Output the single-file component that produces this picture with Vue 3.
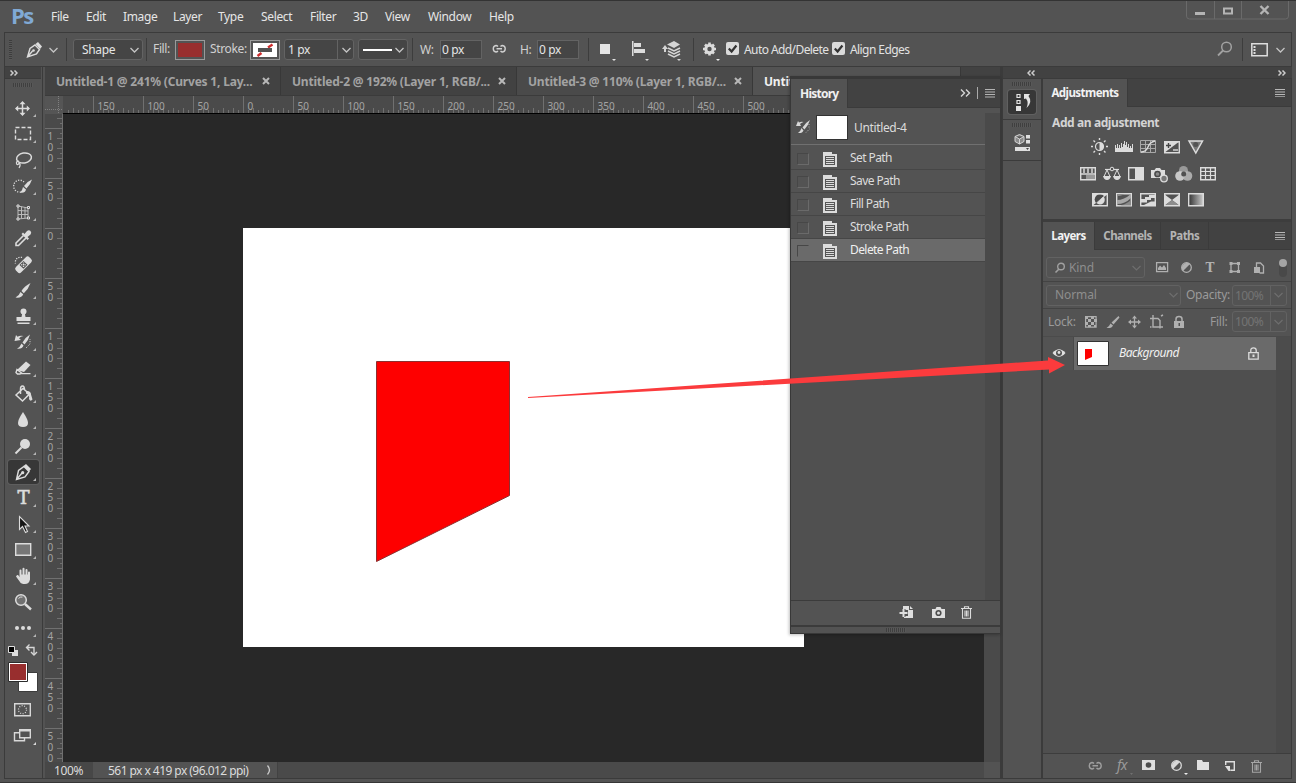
<template>
  <div class="app">
    <header class="menubar">
      <div class="logo">Ps</div>
      <nav class="menus">
        <span v-for="item in menus" :key="item">{{ item }}</span>
      </nav>
      <div class="winbtns">
        <svg width="103" height="20" viewBox="0 1 103 20">
          <path d="M.5 0v16q0 3 3 3h96q3 0 3-3V0M28.500 0v19M55.500 0v19" fill="none" stroke="#6a6a6a" />
          <path d="M9 12h10v3H9z" fill="#b4b4b4" />
          <path d="M38 8.500h8v5h-8z" fill="none" stroke="#b4b4b4" stroke-width="2" />
          <path d="M74.500 6l8 8m0-8l-8 8" stroke="#b4b4b4" stroke-width="2.400" />
        </svg>
      </div>
    </header>

    <section class="options">
      <span class="grip-v"></span>
      <svg class="ic" width="17" height="18" viewBox="0 0 17 18" v-html="icons.penSmall"></svg>
      <svg class="ic" width="9" height="6" viewBox="0 0 9 6" v-html="icons.chev"></svg>
      <i class="sep"></i>
      <div class="field select w70">Shape<svg width="9" height="6" viewBox="0 0 9 6" v-html="icons.chev"></svg></div>
      <i class="sep"></i>
      <span class="label up">Fill:</span>
      <span class="swatch"><b class="red"></b></span>
      <span class="label up">Stroke:</span>
      <span class="swatch">
        <svg width="24" height="14" viewBox="0 0 24 14">
          <path d="M0 0h24v14H0z" fill="#fff" />
          <path d="M4.500 13l4-3M15 4.500L19.500 1.500" stroke="#cf2d2d" stroke-width="2.400" />
          <path d="M5 5h14v4H5z" fill="#535353" />
        </svg>
      </span>
      <div class="field combo w70"><span>1 px</span><i></i><svg width="9" height="6" viewBox="0 0 9 6" v-html="icons.chev"></svg></div>
      <div class="field select w50"><b class="line"></b><svg width="9" height="6" viewBox="0 0 9 6" v-html="icons.chev"></svg></div>
      <i class="sep"></i>
      <span class="label">W:</span>
      <div class="field num">0 px</div>
      <svg class="ic up" width="15" height="10" viewBox="0 0 15 10" v-html="icons.link"></svg>
      <span class="label">H:</span>
      <div class="field num">0 px</div>
      <i class="sep"></i>
      <svg class="ic up" width="18" height="24" viewBox="0 0 18 24"><path d="M0 7h10v10H0zM12 22h4l-2 2z" fill="#e4e4e4" /></svg>
      <svg class="ic up" width="18" height="24" viewBox="0 0 18 24"><path d="M0 4h1.500v15H0zM2 6h7v4H2zM2 12h11v4H2zM13 22h4l-2 2z" fill="#dcdcdc" /></svg>
      <svg class="ic up" width="20" height="24" viewBox="0 0 20 24">
        <path d="M0 12l3-4 3 4H4v3H2v-3zM5 7.500l7-3.500 6 3.500-6 3.500zM15 22h4l-2 2z" fill="#d4d4d4" />
        <path d="M6 11l6 3 6-3M6 14l6 3 6-3M6 17l6 3 6-3" fill="none" stroke="#d4d4d4" stroke-width="1.500" />
      </svg>
      <i class="sep"></i>
      <svg class="ic up" width="18" height="24" viewBox="0 0 18 24">
        <circle cx="6.500" cy="12" r="3.700" fill="none" stroke="#dcdcdc" stroke-width="3" />
        <path d="M6.500 5.500v2M6.500 16.500v2M0 12h2M11 12h2M2 7.500l1.500 1.500M9.500 15l1.500 1.500M2 16.500L3.500 15M9.500 9L11 7.500" stroke="#dcdcdc" stroke-width="2.600" />
        <path d="M13 22h4l-2 2z" fill="#eee" />
      </svg>
      <svg class="ic up" width="13" height="14" viewBox="0 0 13 14" v-html="icons.check"></svg>
      <span class="label light">Auto Add/Delete</span>
      <svg class="ic up" width="13" height="14" viewBox="0 0 13 14" v-html="icons.check"></svg>
      <span class="label light">Align Edges</span>
      <svg class="ic up" width="16" height="16" viewBox="0 0 16 16"><circle cx="9.500" cy="6" r="4.800" fill="none" stroke="#a2a2a2" stroke-width="1.500" /><path d="M6 9.500L1 14.500" stroke="#a2a2a2" stroke-width="1.800" /></svg>
      <i class="sep"></i>
      <svg class="ic" width="17" height="14" viewBox="0 0 17 14"><path d="M.8.8h15.400v12H.8z" fill="none" stroke="#dedede" stroke-width="1.500" /><path d="M3.500 3v8" stroke="#dedede" stroke-width="2" stroke-dasharray="2 1" /></svg>
      <svg class="ic" width="9" height="6" viewBox="0 0 9 6" v-html="icons.chev"></svg>
    </section>

    <main class="work">
      <aside class="tools">
        <div class="tools-head"><svg width="8" height="6" viewBox="0 0 8 6" v-html="icons.dblRight"></svg></div>
        <span class="grip-h"></span>
        <div v-for="tool in tools" :key="tool" class="tool" :class="{ on: tool === 'pen' }">
          <svg width="31" height="24" viewBox="0 0 31 24">
            <g v-html="icons[tool]"></g>
            <path v-if="tool !== 'zoom'" d="M28 18v3h-3z" fill="#b5b5b5" />
          </svg>
        </div>
        <svg class="colors" width="37" height="110" viewBox="0 0 37 110">
          <path d="M7 9h6v6H7z" fill="#dedede" /><path d="M3.500 5.500h6v6h-6z" fill="#000" stroke="#dedede" />
          <path d="M22 6.500h7v6M24.500 3.500l-3 3 3 3M26 11l3 3 3-3" fill="none" stroke="#d6d6d6" stroke-width="1.400" />
          <path d="M13.500 31.500h19v19h-19z" fill="#fff" stroke="#3c3c3c" />
          <path d="M3.500 21.500h19v19h-19z" fill="#fff" stroke="#2c2c2c" /><path d="M5 23h16v16H5z" fill="#982e2e" />
          <path d="M9.700 62.700h15.600v12H9.700z" fill="none" stroke="#d8d8d8" stroke-width="1.400" />
          <circle cx="17.500" cy="68.700" r="4" fill="none" stroke="#d8d8d8" stroke-width="1.300" stroke-dasharray="1 1.500" />
          <path d="M14.500 91.700h-5v8h10v-3M14.700 89h10.600v7.800H14.700z" fill="none" stroke="#d8d8d8" stroke-width="1.400" />
          <path d="M14 88h12v2.500H14zM31 101v3h-3z" fill="#d8d8d8" />
        </svg>
      </aside>

      <section class="doc">
        <div class="tabs">
          <div v-for="tab in tabs" :key="tab" class="tab">
            <span>{{ tab }}</span>
            <svg width="8" height="8" viewBox="0 0 8 8"><path d="M1 1l6 6M7 1L1 7" stroke="#b8b8b8" stroke-width="2" /></svg>
          </div>
          <div class="tab active"><span>Untitled-4</span></div>
        </div>
        <svg class="ruler-top" width="955" height="18" viewBox="45 96 955 18">
          <path d="M45 96h18v18H45z" fill="#555" />
          <path d="M45 109.500h18M58.500 96v18" stroke="#808080" stroke-dasharray="1 1" />
          <path d="M63 113.500h938" stroke="#000" />
          <path :d="topTicks" stroke="#707070" />
          <text v-for="t in topLabels" :key="t.x" :x="t.x + 4.500" y="110">{{ t.text }}</text>
        </svg>
        <div class="stage">
          <svg class="ruler-left" width="18" height="648" viewBox="45 114 18 648">
            <path :d="leftTicks" stroke="#707070" />
            <path d="M62.500 114v648" stroke="#707070" />
            <g v-for="t in leftLabels" :key="t.y">
              <text v-for="(c, i) in t.text" :key="i" x="47.500" :y="t.y + 12 + i * 11">{{ c }}</text>
            </g>
          </svg>
          <svg class="canvas" width="921" height="648" viewBox="63 114 921 648">
            <path d="M243 228h561v419H243z" fill="#fff" />
            <path d="M376.500 361.500h133v134l-133 66z" fill="#fe0000" stroke="#8c3030" />
          </svg>
          <span class="vscroll"></span>
        </div>
        <div class="status">
          <span class="pct">100%</span>
          <span class="info">561 px x 419 px (96.012 ppi)<svg width="5" height="10" viewBox="0 0 5 10"><path d="M.5.5q4 4.500 0 9" fill="none" stroke="#ccc" stroke-width="1.300" /></svg></span>
          <span class="hscroll"></span>
          <span class="corner"></span>
        </div>
      </section>

      <section class="dock">
        <div class="dock-head">
          <svg width="8" height="6" viewBox="0 0 8 6" v-html="icons.dblLeft"></svg>
          <svg width="8" height="6" viewBox="0 0 8 6" v-html="icons.dblRight"></svg>
        </div>
        <div class="dock-body">
          <aside class="strip">
            <div class="strip-cell">
              <span class="grip-h"></span>
              <div class="strip-btn on">
                <svg width="28" height="24" viewBox="0 0 28 24">
                  <path d="M9 4.500h3v3H9zM9 10.500h3v3H9z" fill="none" stroke="#e4e4e4" stroke-width="1.200" />
                  <path d="M8 16h5v5H8zM16 9V4h6l-1.500 2q4.500 6-2 12 2.500-5.500-.5-9.500z" fill="#e4e4e4" />
                </svg>
              </div>
            </div>
            <div class="strip-cell">
              <span class="grip-h"></span>
              <div class="strip-btn">
                <svg width="28" height="24" viewBox="0 0 28 24">
                  <path d="M11.500 3.500l4.500 2v5l-4.500 2.500L7 10.500v-5zM7 5.500l4.500 2.500L16 5.500M11.500 8v5" fill="#8a8a8a" stroke="#d4d4d4" />
                  <path d="M18 4h4v3.500h-4zM18 9h4v3.500h-4zM7 16h15v4H7z" fill="#dedede" /><path d="M18 17h3l-1.500 2z" fill="#444" />
                </svg>
              </div>
            </div>
          </aside>

          <section class="panels">
            <div class="panel adjust">
              <div class="panel-tabs"><b class="on w84">Adjustments</b><svg width="11" height="8" viewBox="0 0 11 8" v-html="icons.burger"></svg></div>
              <h4>Add an adjustment</h4>
              <div v-for="(row, i) in adjustments" :key="i" class="adj-row">
                <svg v-for="name in row" :key="name" width="24" height="20" viewBox="0 0 24 20" v-html="icons[name]"></svg>
              </div>
            </div>

            <div class="panel layers">
              <div class="panel-tabs">
                <b class="on">Layers</b><b class="w66">Channels</b><b class="w48">Paths</b>
                <svg width="11" height="8" viewBox="0 0 11 8" v-html="icons.burger"></svg>
              </div>
              <div class="lrow filter">
                <div class="dim kind">
                  <svg width="12" height="12" viewBox="0 0 12 12"><circle cx="7" cy="4.500" r="3.300" fill="none" stroke="#a0a0a0" stroke-width="1.400" /><path d="M5 7L1.500 10.500" stroke="#a0a0a0" stroke-width="1.600" /></svg>
                  <span>Kind</span>
                  <svg width="9" height="6" viewBox="0 0 9 6" v-html="icons.chevDim"></svg>
                </div>
                <svg width="141" height="22" viewBox="1146 257 141 22">
                  <g fill="none" stroke="#b0b0b0" stroke-width="1.300">
                    <path d="M1156.600 262.600h11v9h-11z" />
                    <circle cx="1186.500" cy="267.500" r="4.800" />
                    <path d="M1231 263.500h7.500v8H1231z" />
                    <path d="M1256.500 267v-4h4l3 3v7h-4" />
                  </g>
                  <path d="M1158 270v-2l2-2.500 2 2 2-2.500 2 3v2zM1190 264a5 5 0 0 0-7 7zM1229.500 262h3v3h-3zM1237 262h3v3h-3zM1229.500 270h3v3h-3zM1237 270h3v3h-3zM1254 267h6v6h-6z" fill="#b0b0b0" />
                  <text x="1205.500" y="272" class="tee">T</text>
                  <rect x="1279" y="260" width="8" height="17" rx="4" fill="#494949" />
                  <circle cx="1283" cy="263" r="4" fill="#a4a4a4" />
                </svg>
              </div>
              <div class="lrow blend">
                <div class="dim mode"><span>Normal</span><svg width="9" height="6" viewBox="0 0 9 6" v-html="icons.chevDim"></svg></div>
                <span class="dimlabel">Opacity:</span>
                <div class="dim pctbox"><span>100%</span><svg width="9" height="6" viewBox="0 0 9 6" v-html="icons.chevDim"></svg></div>
              </div>
              <div class="lrow lock">
                <span class="dimlabel locklabel">Lock:</span>
                <svg width="108" height="16" viewBox="1080 314 108 16">
                  <path d="M1085.600 316.600h10.500v10.500h-10.500z" fill="none" stroke="#b0b0b0" stroke-width="1.200" />
                  <path d="M1085 316h3v3h-3zM1091 316h3v3h-3zM1088 319h3v3h-3zM1094 319h3v3h-3zM1085 322h3v3h-3zM1091 322h3v3h-3zM1088 325h3v2h-3zM1094 325h2v2h-2z" fill="#b0b0b0" />
                  <path d="M1118.500 316l-7 6.500 2 2 6-7zM1110.500 323.500l2.500 2q-1 3-6.500 2.500 2.500-1 4-4.500z" fill="#b0b0b0" />
                  <path d="M1134.500 317v10M1129.500 322h10" stroke="#b0b0b0" stroke-width="1.300" />
                  <path d="M1134.500 315.500l2.500 3h-5zM1134.500 328.500l2.500-3h-5zM1128 322l3-2.500v5zM1141 322l-3-2.500v5z" fill="#b0b0b0" />
                  <path d="M1153 315v12h10M1150 318.500h8l2 2v8M1161 316l2-1M1150 327h1.500" fill="none" stroke="#b0b0b0" stroke-width="1.400" />
                  <path d="M1174 321h10v7h-10z" fill="#b0b0b0" /><path d="M1176 321v-2q0-2.500 3-2.500t3 2.500v2" fill="none" stroke="#b0b0b0" stroke-width="1.500" />
                  <path d="M1178.500 323h1.500v3h-1.500z" fill="#535353" />
                </svg>
                <span class="dimlabel filllabel">Fill:</span>
                <div class="dim pctbox"><span>100%</span><svg width="9" height="6" viewBox="0 0 9 6" v-html="icons.chevDim"></svg></div>
              </div>
              <div class="layer-list">
                <div class="eye">
                  <svg width="14" height="10" viewBox="0 0 14 10"><path d="M.5 5Q7-2.500 13.500 5 7 12.500.5 5z" fill="#e2e2e2" /><circle cx="7" cy="5" r="3" fill="#505050" /><circle cx="7" cy="4.500" r="1.400" fill="#e2e2e2" /></svg>
                </div>
                <div class="layer">
                  <svg class="thumb" width="32" height="25" viewBox="0 0 32 25"><path d="M.5.500h31v24H.5z" fill="#fff" stroke="#333" /><path d="M8 8h7v8l-7 3z" fill="#fe0000" /></svg>
                  <em>Background</em>
                  <svg width="11" height="13" viewBox="0 0 11 13"><path d="M.8 5.600h9.400v6.600H.8zM2.800 5.500V3.300Q2.800.8 5.500.8t2.700 2.500v2.200" fill="none" stroke="#dcdcdc" stroke-width="1.300" /><path d="M4.500 7.500h2v2.500h-2z" fill="#dcdcdc" /></svg>
                </div>
                <div class="list-gutter"></div>
              </div>
              <div class="list-rest"></div>
              <svg class="layer-foot" width="248" height="24" viewBox="1043 754 248 24">
                <g transform="translate(1088 761)" opacity=".6" v-html="icons.link"></g>
                <text x="1117" y="770" class="fx">fx</text>
                <path d="M1142 760h13v10h-13z" fill="#dedede" /><circle cx="1148.500" cy="765" r="2.800" fill="#4c4c4c" />
                <circle cx="1176.500" cy="765.500" r="4.800" fill="none" stroke="#d8d8d8" stroke-width="1.300" /><path d="M1180 762a5 5 0 0 0-7 7z" fill="#d8d8d8" /><path d="M1184 773h4l-2 2z" fill="#eee" />
                <path d="M1130 773h3l-1.500 2z" fill="#707070" />
                <path d="M1197 760h5l1 2h6v8h-12z" fill="#e0e0e0" />
                <path d="M1225.700 765v-3.300h8.600v8.600h-4" fill="none" stroke="#dedede" stroke-width="1.400" /><path d="M1225 766h5v5h-1.500z" fill="#dedede" />
                <g transform="translate(1251 760)" opacity=".6" v-html="icons.trash"></g>
              </svg>
            </div>
          </section>
        </div>
      </section>
    </main>

    <section class="history">
      <div class="history-head">
        <b>History</b>
        <svg width="36" height="12" viewBox="0 0 36 12">
          <path d="M1 2.500l3.500 3.500L1 9.500M6 2.500L9.500 6 6 9.500" fill="none" stroke="#d4d4d4" stroke-width="1.400" />
          <path d="M17.500 0v12" stroke="#aaa" />
          <path d="M25 2.500h10M25 5h10M25 7.500h10M25 10h10" stroke="#b4b4b4" />
        </svg>
      </div>
      <div class="history-body">
        <div class="history-list">
          <div class="snapshot">
            <svg width="15" height="14" viewBox="0 0 15 14"><path d="M14 0q-5 3-7.500 7.500l2 2Q12 6 14 0zM5.500 8l2 2.500q-1 3-5.500 2.500 2.500-1.500 3.500-5zM0 6l2-5 1 1.500q2-1 4.500-.5Q5 3 4 4l1 2z" fill="#d8d8d8" /><path d="M10 12.500l4-4M13 4v4" stroke="#bbb" stroke-dasharray="1 1.500" /></svg>
            <span class="shot"></span>
            <span class="shot-name">Untitled-4</span>
          </div>
          <div v-for="state in states" :key="state" class="state" :class="{ on: state === 'Delete Path' }">
            <i></i>
            <svg width="14" height="15" viewBox="0 0 14 15"><path d="M0 0h9v2h5v13H0z" fill="#dcdcdc" /><path d="M2 4h10v9H2z" fill="#565656" /><path d="M3 5.500h8M3 7.500h8M3 9.500h8M3 11.500h8" stroke="#dcdcdc" /></svg>
            <span>{{ state }}</span>
          </div>
        </div>
        <div class="history-scroll"></div>
      </div>
      <div class="history-foot">
        <svg width="14" height="13" viewBox="0 0 14 13"><path d="M4 0h6v4h4v8H5v-2h4V4H4z" fill="#dedede" /><path d="M11 0l3 3h-3z" fill="#dedede" /><path d="M4.500 3v8M.5 7h8" stroke="#535353" stroke-width="4" /><path d="M4.500 3v8M.5 7h8" stroke="#dedede" stroke-width="2" /></svg>
        <svg width="13" height="11" viewBox="0 0 13 11"><path d="M0 2h3.500L4.500 0h4l1 2H13v9H0z" fill="#dedede" /><circle cx="6.500" cy="6" r="2.300" fill="none" stroke="#4c4c4c" stroke-width="1.600" /></svg>
        <svg width="11" height="13" viewBox="0 0 11 13" v-html="icons.trash"></svg>
      </div>
      <div class="history-grip"><span class="grip-h"></span></div>
    </section>

    <svg class="arrow" width="540" height="46" viewBox="526 354 540 46">
      <path d="M528 397L1048 360.500V357l17 8-16 8.500v-4L528 398z" fill="#fb3b3d" />
    </svg>
  </div>
</template>

<script setup>
const menus = ['File', 'Edit', 'Image', 'Layer', 'Type', 'Select', 'Filter', '3D', 'View', 'Window', 'Help']

const tabs = [
  'Untitled-1 @ 241% (Curves 1, Lay...',
  'Untitled-2 @ 192% (Layer 1, RGB/...',
  'Untitled-3 @ 110% (Layer 1, RGB/...'
]

const states = ['Set Path', 'Save Path', 'Fill Path', 'Stroke Path', 'Delete Path']

const tools = [
  'move', 'marquee', 'lasso', 'quickSelect', 'cropPersp', 'eyedropper', 'heal', 'brush', 'stamp',
  'historyBrush', 'eraser', 'bucket', 'drop', 'dodge', 'pen', 'type', 'select', 'rect', 'hand', 'zoom', 'dots'
]

const adjustments = [
  ['bright', 'levels', 'curves', 'exposure', 'vibrance'],
  ['hue', 'balance', 'bw', 'photo', 'mixer', 'lookup'],
  ['invert', 'poster', 'threshold', 'selective', 'gradient']
]

// rulers: one unit per pixel, the page origin is at 243,228
const topLabels = []
const leftLabels = []
let topTicks = ''
let leftTicks = ''

for (let x = 68; x < 985; x += 5) {
  const d = x - 243
  const len = d % 50 === 0 ? 17 : d % 10 === 0 ? 5 : 3
  topTicks += `M${x + 0.5} 113v-${len}`
  if (d % 50 === 0) topLabels.push({ x, text: String(Math.abs(d)) })
}
for (let y = 118; y < 762; y += 5) {
  const d = y - 228
  const len = d % 50 === 0 ? 18 : d % 10 === 0 ? 6 : 3
  leftTicks += `M63 ${y + 0.5}h-${len}`
  if (d % 50 === 0) leftLabels.push({ y, text: String(Math.abs(d)).split('') })
}

const c = '#dcdcdc'
const box = `<path d="M4.700 3.700h14.600v12H4.700z" fill="none" stroke="${c}" stroke-width="1.400"/>`

const icons = {
  chev: '<path d="M.5 1l4 4 4-4" fill="none" stroke="#c4c4c4" stroke-width="1.300"/>',
  chevDim: '<path d="M.5 1l4 4 4-4" fill="none" stroke="#6e6e6e" stroke-width="1.200"/>',
  dblRight: '<path d="M.5.500L3 3 .5 5.500M4.500.500L7 3 4.500 5.500" fill="none" stroke="#ccc" stroke-width="1.500"/>',
  dblLeft: '<path d="M3.500.500L1 3l2.500 2.500M7.500.500L5 3l2.500 2.500" fill="none" stroke="#ccc" stroke-width="1.500"/>',
  burger: '<path d="M0 .5h10M0 3h10M0 5.500h10M0 7.800h10" stroke="#b8b8b8"/>',
  check: '<rect width="13" height="13" rx="2" fill="#dadada"/><path d="M2.800 6.500l2.800 3 4.800-6" fill="none" stroke="#333" stroke-width="2.200"/>',
  link: '<path d="M6 2.500Q5 1.500 4 1.500A3.300 3.300 0 0 0 4 8q1 0 2-1M8.500 2.500q1-1 2-1a3.300 3.300 0 0 1 0 6.500q-1 0-2-1M4.500 4.800h5.500" fill="none" stroke="#d0d0d0" stroke-width="1.400"/>',
  trash: '<path d="M0 2.500h11M3.500 2V.7h4V2M1.500 3v9.200h8V3M4 4.500v6M5.500 4.500v6M7 4.500v6" fill="none" stroke="#dcdcdc" stroke-width="1.100"/>',
  penSmall: `<path d="M1.500 16L4 7.500 9 4l4.500 4.500L10.500 13zM1.500 16l5-6" fill="none" stroke="${c}" stroke-width="1.400"/><circle cx="7.500" cy="9.500" r="1.300" fill="${c}"/><path d="M9.500 3L12 1l4 4.500-2 2.500z" fill="${c}"/>`,
  move: `<path d="M14.500 6.500v12M8.500 12.500h12" stroke="${c}" stroke-width="1.500"/><path d="M14.500 5l3 3.200h-6zM14.500 20l3-3.200h-6zM7 12.500l3.200-3v6zM22 12.500l-3.200-3v6z" fill="${c}"/>`,
  marquee: `<path d="M7.500 5.500h15v12h-15z" fill="none" stroke="${c}" stroke-width="1.400" stroke-dasharray="4 2"/>`,
  lasso: `<ellipse cx="16" cy="10" rx="7.500" ry="5" transform="rotate(-10 16 10)" fill="none" stroke="${c}" stroke-width="1.500"/><path d="M11 13q-3 0-2.500 2.500t3-.5q1.500 2-.5 5" fill="none" stroke="${c}" stroke-width="1.200"/>`,
  quickSelect: `<path d="M16 8a6 6 0 1 0-3 10" fill="none" stroke="${c}" stroke-width="1.300" stroke-dasharray="1.200 1.400"/><path d="M24 5.500q-5 2-8 6.500l2.500 2.500q4-4 5.500-9zM15 13l3 2.500q-1 4-6 3 2.500-2 3-5.500z" fill="${c}"/>`,
  cropPersp: `<path d="M10 6l10 2v10l-10 1zM13.500 6.500v12M17 7v11M10 10.500l10 .5M10 14.500h10" fill="none" stroke="#bbb" stroke-width="1"/><path d="M9 5h2v2H9zM19.500 6.500h2v2h-2zM9 18h2v2H9zM19.500 17h2v2h-2z" fill="#555" stroke="${c}"/>`,
  eyedropper: `<path d="M15.500 9.500L8 17v2.500h2.500L18 12" fill="none" stroke="${c}" stroke-width="1.600"/><path d="M13.500 8l1.500-1.500 1.500 1.500 2.500-3q2-1.500 3.500 0t0 3.500l-3 2.500 1.500 1.500-1.500 1.500z" fill="${c}"/>`,
  heal: `<path d="M14 5.500a5 5 0 0 0-6.500 6" fill="none" stroke="${c}" stroke-width="1.300" stroke-dasharray="1.200 1.300"/><rect x="6" y="9" width="19" height="7.500" rx="2.500" transform="rotate(-45 15.500 12.700)" fill="${c}"/><path d="M11.500 13l4-4 4 3.700-4 4z" fill="#535353"/><path d="M13.200 12.800h4.800M15.500 10.500v5" stroke="${c}" stroke-width="1.400" stroke-dasharray="1 .7"/>`,
  brush: `<path d="M22.500 5q-6 3-9 8l2.300 2.300Q20.500 11 22.500 5zM12.500 14l2.700 2.300q-1.500 4-7.700 3.200 3.500-1.500 5-5.500z" fill="${c}"/>`,
  stamp: `<circle cx="15.500" cy="7.500" r="3" fill="${c}"/><path d="M14.300 9h2.500l.7 4h5v4h-14v-4h5zM9.500 18.500h12V20h-12z" fill="${c}"/>`,
  historyBrush: `<path d="M22 4.500q-5 3-7.500 8l2 2Q20.500 10.500 22 4.500zM13.500 13.500l2 2q-1.500 4-6.500 3.200 3-1.500 4.500-5.200zM6.500 11l1.500-6 1.500 1.800Q12 5 15.500 6q-3 .5-4.500 2.300l2 1.700z" fill="${c}"/><path d="M18 18l4-4V9" fill="none" stroke="${c}" stroke-dasharray="1 1.500"/>`,
  eraser: `<path d="M9 14l9-8.500 4.500 3.500-6.500 7z" fill="${c}"/><path d="M9 13.500L13.500 17 12 18H9.500L8 16.500zM13 17.600h9.500" fill="none" stroke="${c}" stroke-width="1.400"/>`,
  bucket: `<path d="M8 13l7-6.500 6.500 5.500-7 7zM12.500 12V7q0-3 2-3t2 4" fill="none" stroke="${c}" stroke-width="1.500"/><path d="M18 9q5-.5 5 3.500l1.500 5q-2 2.500-3.500-.5 1-4-3-5.500z" fill="${c}"/>`,
  drop: `<path d="M15 4q5 7.500 5 11 0 4-5 4t-5-4q0-3.500 5-11z" fill="${c}"/>`,
  dodge: `<circle cx="17" cy="10" r="5" fill="${c}"/><path d="M13.500 13.500L7.500 19.500" stroke="${c}" stroke-width="2"/>`,
  pen: `<path d="M8.500 19.500l2-9 5.500-4 5 5-4 5.500zM8.500 19.500l5.500-6.500" fill="none" stroke="${c}" stroke-width="1.400"/><circle cx="14.700" cy="12.700" r="1.600" fill="${c}"/><path d="M15.500 6L18 4l5 5-2 2.500z" fill="${c}"/>`,
  type: `<text x="9.500" y="18" font-family="DejaVu Serif, serif" font-size="18" stroke="${c}" stroke-width=".6" fill="${c}">T</text>`,
  select: `<path d="M11.500 4.500v13l3-3 3 6 2-1-2.500-5.500h4z" fill="#151515" stroke="${c}" stroke-width="1.100"/>`,
  rect: `<path d="M7.700 5.700h15v11.600h-15z" fill="#777" stroke="${c}" stroke-width="1.400"/>`,
  hand: `<path d="M9.500 12L12 15M12.500 12V6.500M15.500 11V4.800M18.500 12V6M21 13.500V8.500" fill="none" stroke="${c}" stroke-width="2" stroke-linecap="round"/><path d="M8 12.500l1.500-1 2.500 2 .5-3h9.500v5q-1 4.500-5 4.500t-5-2z" fill="${c}"/>`,
  zoom: `<circle cx="13" cy="10" r="5.300" fill="#707070" stroke="${c}" stroke-width="1.500"/><path d="M17 14l6 5.500" stroke="${c}" stroke-width="2.400"/><path d="M10.500 8.500q1.500-2 4-1.500" fill="none" stroke="${c}"/>`,
  dots: `<circle cx="9" cy="12" r="2" fill="${c}"/><circle cx="15" cy="12" r="2" fill="${c}"/><circle cx="21" cy="12" r="2" fill="${c}"/>`,
  bright: `<circle cx="11.500" cy="9.500" r="4" fill="none" stroke="${c}" stroke-width="1.200"/><path d="M11.500 5.500a4 4 0 0 1 0 8z" fill="${c}"/><path d="M11.500 1v2M11.500 16v2M3 9.500h2M18 9.500h2M5.500 3.500L7 5M16 14l1.500 1.500M5.500 15.500L7 14M16 5l1.500-1.500" stroke="${c}" stroke-width="1.400"/>`,
  levels: `<path d="M3 15V8h1v3h1V7h1v4h1V8h1v3h1V6h1v4h1V7h1V4h1v4h1V5h1v5h1V7h1v4h1V9h1v2h1V7h1v8z" fill="${c}"/>`,
  curves: `<path d="M4.500 3.500h15v12h-15zM9.500 3.500v12M14.500 3.500v12M4.500 7.500h15M4.500 11.500h15" fill="none" stroke="#a8a8a8"/><path d="M5 15q5 0 7-5t7-6" fill="none" stroke="${c}" stroke-width="1.300"/>`,
  exposure: `<path d="M4 16L20 4v12z" fill="#535353"/><path d="M4 16V4h16z" fill="${c}"/><path d="M4.700 4.700h14.600v11H4.700z" fill="none" stroke="${c}" stroke-width="1.400"/><path d="M8.500 6v5M6 8.500h5" stroke="#444" stroke-width="1.400"/><path d="M13 13h5" stroke="${c}" stroke-width="1.400"/>`,
  vibrance: `<path d="M5 4h13.500l-6.700 12z" fill="#787878" stroke="${c}" stroke-width="1.500"/><circle cx="11.700" cy="7.500" r="2.500" fill="#444" opacity=".7"/>`,
  hue: `<path d="M4.700 3.700h14.600v12H4.700zM4 10h16" fill="#555" stroke="${c}" stroke-width="1.400"/><path d="M8 4v6M12 4v6M16 4v6" stroke="#b8b8b8" stroke-width="2"/><path d="M10 11h9v4h-9z" fill="#999"/>`,
  balance: `<path d="M5 5.500h14" stroke="${c}" stroke-width="1.200"/><circle cx="12" cy="5" r="1.800" fill="#535353" stroke="${c}"/><path d="M7 6L4 12.500h6zM17 6l-3 6.500h6z" fill="none" stroke="${c}"/><path d="M3 12h8q-1 4-4 4t-4-4zM13 12h8q-1 4-4 4t-4-4z" fill="${c}"/>`,
  bw: `${box}<path d="M11 4h8.500v11.500H11z" fill="${c}"/>`,
  photo: `<path d="M3 6h3.500L8 4h4l1.500 2H17v8H3z" fill="${c}"/><circle cx="9.500" cy="10" r="2.600" fill="#888" stroke="#484848" stroke-width="1.500"/><circle cx="16" cy="14.500" r="3.300" fill="#777" stroke="${c}" stroke-width="1.300"/>`,
  mixer: `<circle cx="11.500" cy="6.500" r="4.500" fill="#999"/><circle cx="8" cy="12" r="4.800" fill="#dcdcdc" opacity=".85"/><circle cx="15.500" cy="12" r="4.800" fill="#bbb" opacity=".85"/><circle cx="11.700" cy="10" r="2.500" fill="#505050"/>`,
  lookup: `<path d="M4.700 3.700h14.600v12H4.700z" fill="#555" stroke="${c}" stroke-width="1.400"/><path d="M9.500 4v12M14.500 4v12M4 7.500h16M4 11.500h16" stroke="${c}" stroke-width="1.200"/>`,
  invert: `<path d="M4 4h16L4 16z" fill="${c}"/><path d="M16 6a5 5 0 0 0-8 7z" fill="#4a4a4a"/><path d="M15.500 6.500a4.700 4.700 0 0 1-7 6.500z" fill="${c}"/>${box}`,
  poster: `${box}<path d="M5 10q7 0 14-6v4q-6 6-14 6z" fill="#a8a8a8"/><path d="M5 6q5 0 7-2H5zM5 15.500q8 0 14-5.500v5.500z" fill="#8a8a8a"/>`,
  threshold: `${box}<path d="M5 12.500V9h4V7h4V5h6v3h-4v2h-4v2.500zM7 15.500l8-4h4v4z" fill="${c}"/>`,
  selective: `<path d="M4 4l8 6-8 6zM20 4l-8 6 8 6z" fill="${c}"/><path d="M4 16l8-6 8 6z" fill="#8c8c8c"/>${box}`,
  gradient: `<defs><linearGradient id="gm"><stop offset="0" stop-color="#333"/><stop offset="1" stop-color="#ccc"/></linearGradient></defs><path d="M4.700 3.700h14.600v12H4.700z" fill="url(#gm)" stroke="${c}" stroke-width="1.400"/>`
}
</script>

<style>
body {
  margin: 0;
  overflow: hidden;
}
</style>

<style scoped>
* {
  box-sizing: border-box;
}

.app {
  position: relative;
  width: 1296px;
  height: 783px;
  background: #535353;
  border-top: 1px solid #333;
  border-bottom: 1px solid #363636;
  font: 12px/16px "Noto Sans", "Open Sans", sans-serif;
  letter-spacing: -0.35px;
  color: #dcdcdc;
  white-space: nowrap;
  overflow: hidden;
}

svg {
  display: block;
  flex: none;
}

.menubar {
  display: flex;
  height: 31px;
}

.logo {
  width: 51px;
  padding: 1px 0 0 11px;
  font: bold 22px/27px "Open Sans", sans-serif;
  letter-spacing: -1.5px;
  color: #80a9d5;
}

.menus {
  display: grid;
  grid-template-columns: 35px 37px 50px 45px 43px 49px 43px 32px 43px 61px 60px;
  line-height: 32px;
  color: #e6e6e6;
}

.winbtns {
  margin-left: auto;
  padding-right: 7px;
}

.options {
  display: grid;
  grid-template-columns: 17px 23px 17px 7px 73px 7px 22px 35px 40px 34px 74px 54px 8px 20px 52px 28px 17px 51px 12px 32px 30px 31px 10px 23px 18px 88px 18px 367px 25px 9px 25px 15px;
  align-items: center;
  height: 35px;
  margin: 0 4px;
  padding-left: 4px;
  border: 1px solid #3b3b3b;
}

.grip-v {
  width: 3px;
  height: 20px;
  background: repeating-linear-gradient(#3d3d3d 0 1px, #585858 1px 2px);
}

.grip-h {
  display: block;
  width: 20px;
  height: 4px;
  margin: 0 auto;
  background: repeating-linear-gradient(90deg, #3f3f3f 0 1px, #585858 1px 2px);
}

.sep {
  width: 1px;
  height: 23px;
  background: #3d3d3d;
}

.label {
  color: #d0d0d0;
}

.light {
  letter-spacing: -0.58px;
  color: #e2e2e2;
}

.up {
  position: relative;
  top: -1px;
}

.field {
  display: flex;
  align-items: center;
  height: 21px;
  padding-top: 1px;
  border: 1px solid #636363;
  border-radius: 3px;
  background: #454545;
  color: #e6e6e6;
}

.select {
  justify-content: space-between;
  padding: 0 3px 0 8px;
}

.w70 {
  width: 70px;
}

.w50 {
  width: 50px;
}

.line {
  width: 29px;
  height: 2px;
  margin-left: -4px;
  background: #fff;
}

.combo {
  padding: 0 0 0 3px;
}

.combo span {
  width: 49px;
}

.combo i {
  width: 1px;
  height: 19px;
  margin-right: 4px;
  background: #636363;
}

.num {
  width: 42px;
  height: 19px;
  padding-left: 1px;
  border-radius: 0;
}

.swatch {
  width: 30px;
  height: 20px;
  padding: 2px;
  border: 1px solid #9a9a9a;
}

.red {
  display: block;
  width: 24px;
  height: 14px;
  background: #982e2e;
}

.work {
  display: flex;
  height: 712px;
  margin: 0 4px;
  border-bottom: 1px solid #3b3b3b;
}

.tools {
  width: 39px;
  padding-right: 1px;
  border-left: 1px solid #3b3b3b;
  border-right: 1px solid #3b3b3b;
}

.tools-head {
  height: 12px;
  margin-bottom: 4px;
  padding: 3px 0 0 5px;
  border-bottom: 1px solid #3b3b3b;
  background: #424242;
}

.tools-head + .grip-h {
  margin-bottom: 9px;
}

.tool {
  width: 31px;
  height: 24px;
  margin: 0 0 2px 3px;
  border-radius: 3px;
}

.tool.on {
  background: #373737;
  box-shadow: 0 0 0 1px #5e5e5e;
}

.colors {
  margin-top: -1px;
}

.doc {
  display: flex;
  flex-direction: column;
  width: 956px;
  margin-left: 2px;
  border-right: 1px solid #3b3b3b;
}

.tabs {
  display: flex;
  height: 29px;
  border-bottom: 1px solid #3b3b3b;
  background: #424242;
}

.tab {
  display: flex;
  align-items: center;
  justify-content: space-between;
  width: 236px;
  padding: 0 10px 0 11px;
  border-right: 1px solid #383838;
  font-weight: bold;
  letter-spacing: -0.2px;
  color: #a3a3a3;
}

.tab span {
  padding-top: 2px;
}

.tab:nth-child(3) {
  background: #4a4a4a;
}

.tab.active {
  width: 208px;
  background: #535353;
  color: #f0f0f0;
}

.ruler-top {
  background: #4a4a4a;
}

.ruler-top text,
.ruler-left text {
  font-size: 10px;
  letter-spacing: 0;
  fill: #a4a4a4;
}

.stage {
  display: flex;
  height: 648px;
}

.ruler-left {
  background: #4a4a4a;
}

.canvas {
  background: #282828;
}

.vscroll {
  flex: 1;
  background: #4a4a4a;
}

.status {
  display: flex;
  height: 16px;
  line-height: 17px;
}

.pct {
  width: 48px;
  padding-left: 9px;
  background: #474747;
}

.info {
  display: flex;
  align-items: center;
  justify-content: space-between;
  width: 184px;
  padding: 0 5px 0 15px;
  background: #535353;
  letter-spacing: -0.55px;
}

.hscroll {
  flex: 1;
  border-left: 1px solid #424242;
  background: #4a4a4a;
}

.corner {
  width: 16px;
}

.dock {
  width: 291px;
  border-left: 2px solid #3b3b3b;
}

.dock-head {
  display: flex;
  justify-content: space-between;
  height: 12px;
  padding: 3px 6px 0 24px;
  border-bottom: 1px solid #3b3b3b;
  background: #424242;
}

.dock-body {
  display: flex;
  height: 699px;
}

.strip {
  width: 38px;
}

.strip-cell {
  height: 41px;
  padding-top: 3px;
  border-bottom: 1px solid #3b3b3b;
}

.strip-btn {
  width: 28px;
  height: 24px;
  margin: 4px 0 0 5px;
  border-radius: 3px;
}

.strip-btn.on {
  background: #373737;
  box-shadow: 0 0 0 1px #606060;
}

.panels {
  display: flex;
  flex-direction: column;
  width: 251px;
  border-left: 2px solid #3b3b3b;
  border-right: 1px solid #3b3b3b;
}

.panel-tabs {
  display: flex;
  height: 28px;
  border-bottom: 1px solid #3b3b3b;
  background: #424242;
}

.panel-tabs b {
  width: 52px;
  height: 28px;
  border-right: 1px solid #3b3b3b;
  font-size: 11.5px;
  line-height: 28px;
  text-align: center;
  letter-spacing: -0.55px;
  color: #b4b4b4;
}

.panel-tabs b.on {
  height: 28px;
  background: #535353;
  color: #f2f2f2;
}

.panel-tabs b.w84 {
  width: 85px;
}

.panel-tabs b.w66 {
  width: 66px;
}

.panel-tabs b.w48 {
  width: 48px;
}

.panel-tabs svg {
  margin: 10px 5px 0 auto;
}

.adjust {
  height: 143px;
  border-bottom: 3px solid #3d3d3d;
}

.adjust h4 {
  margin: 7px 0 6px 9px;
  font-size: 12px;
  line-height: 17px;
  letter-spacing: -0.4px;
  color: #d4d4d4;
}

.adj-row {
  display: flex;
  height: 20px;
  margin: 0 0 7px 45px;
}

.adj-row:nth-child(4) {
  margin-bottom: 6px;
  margin-left: 33px;
}

.layers {
  display: flex;
  flex: 1;
  flex-direction: column;
}

.lrow {
  display: flex;
  align-items: center;
  height: 27px;
  padding-left: 3px;
  border-bottom: 1px solid #434343;
}

.lrow.filter {
  height: 32px;
  padding-top: 4px;
}

.lrow.lock {
  height: 28px;
  padding-bottom: 2px;
  border-bottom-color: #4b4b4b;
}

.dim {
  display: flex;
  align-items: center;
  height: 21px;
  border: 1px solid #626262;
  border-radius: 3px;
  color: #8e8e8e;
  letter-spacing: -0.1px;
}

.kind {
  width: 99px;
  margin-right: 1px;
  padding: 0 3px 0 7px;
}

.kind span {
  flex: 1;
  padding-left: 3px;
}

.mode {
  justify-content: space-between;
  width: 135px;
  padding: 0 2px 0 8px;
}

.dimlabel {
  width: 47px;
  margin-left: 5px;
  letter-spacing: -0.25px;
  color: #9a9a9a;
}

.locklabel {
  width: 32px;
  margin-left: 2px;
}

.filllabel {
  width: 23px;
  margin-left: 22px;
}

.pctbox {
  justify-content: space-between;
  width: 55px;
  margin-left: -1px;
  padding: 0 3px 0 2px;
  color: #747474;
}

.pctbox span {
  width: 36px;
  border-right: 1px solid #626262;
  line-height: 19px;
  letter-spacing: -0.6px;
}

.layer-list {
  display: flex;
  height: 33px;
}

.eye {
  width: 31px;
  padding: 11px 0 0 9px;
  border-right: 1px solid #494949;
}

.layer {
  display: flex;
  align-items: center;
  width: 202px;
  padding: 0 17px 1px 3px;
  background: #6a6a6a;
}

.layer em {
  flex: 1;
  padding-left: 10px;
  letter-spacing: -0.45px;
  color: #f0f0f0;
}

.list-gutter {
  flex: 1;
  background: #4c4c4c;
}

.list-rest {
  flex: 1;
  border-right: 15px solid #4a4a4a;
  background: #4f4f4f;
}

.layer-foot {
  box-sizing: content-box;
  border-top: 1px solid #3d3d3d;
}

.tee {
  font: bold 12px "DejaVu Serif", serif;
  fill: #b0b0b0;
}

.fx {
  font: italic 14px "Noto Sans", sans-serif;
  letter-spacing: -0.8px;
  fill: #9a9a9a;
}

.history {
  position: absolute;
  left: 790px;
  top: 75px;
  display: flex;
  flex-direction: column;
  width: 211px;
  height: 558px;
  border: 1px solid #383838;
  border-top-width: 3px;
  background: #535353;
  box-shadow: -1px 1px 3px rgba(0, 0, 0, 0.25);
}

.history-head {
  display: flex;
  align-items: center;
  justify-content: space-between;
  height: 29px;
  padding-right: 4px;
  border-bottom: 1px solid #3b3b3b;
  background: #424242;
}

.history-head b {
  width: 57px;
  height: 29px;
  padding-left: 9px;
  border-right: 1px solid #3b3b3b;
  background: #535353;
  line-height: 30px;
  letter-spacing: -0.75px;
  color: #f0f0f0;
}

.history-body {
  display: flex;
  flex: 1;
  padding-top: 5px;
}

.history-list {
  width: 194px;
  background: linear-gradient(#535353 149px, #505050 149px);
}

.history-scroll {
  flex: 1;
  background: #4a4a4a;
}

.snapshot {
  display: flex;
  align-items: center;
  height: 32px;
  margin-bottom: 2px;
  padding: 0 0 3px 5px;
  border-bottom: 1px solid #707070;
}

.shot {
  width: 32px;
  height: 25px;
  margin: 0 6px 0 5px;
  border: 1px solid #333;
  background: #fff;
}

.shot-name {
  padding-top: 1px;
}

.state {
  display: flex;
  align-items: center;
  height: 23px;
  padding-left: 6px;
  border-bottom: 1px solid #464646;
  letter-spacing: -0.58px;
}

.state i {
  width: 12px;
  height: 12px;
  margin: 1px 14px 0 0;
  border: 1px solid #474747;
  border-right-color: #6a6a6a;
  border-bottom-color: #6a6a6a;
}

.state svg {
  margin: 2px 13px 0 0;
}

.state.on {
  background: #6a6a6a;
  color: #f0f0f0;
}

.history-foot {
  display: flex;
  align-items: center;
  gap: 19px;
  height: 27px;
  padding: 0 0 2px 108px;
  border-top: 1px solid #3b3b3b;
  border-bottom: 2px solid #3b3b3b;
}

.history-foot svg:last-child {
  margin-left: -3px;
}

.history-grip {
  height: 6px;
  padding-top: 1px;
}

.arrow {
  position: absolute;
  left: 526px;
  top: 353px;
}
</style>
